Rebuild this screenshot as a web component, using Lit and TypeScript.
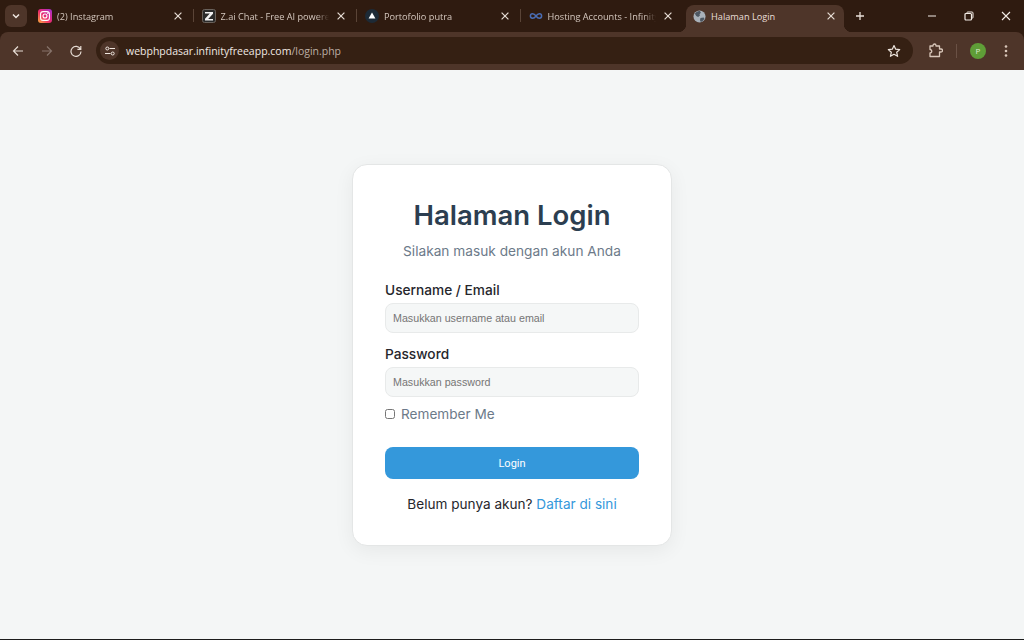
import { LitElement, html, css } from "lit";
import { customElement } from "lit/decorators.js";

const closeIcon = html`<svg class="x" width="8" height="8" viewBox="0 0 8 8"><path d="M.6.6l6.800 6.800M7.400.6L.6 7.400" stroke="currentColor" stroke-width="1.200" fill="none"/></svg>`;

const favicons = {
  insta: html`<svg width="14" height="14" viewBox="0 0 14 14">
    <defs><linearGradient id="ig" x1="0" y1="1" x2="1" y2="0">
      <stop offset="0" stop-color="#fdb03c"/><stop offset=".45" stop-color="#ee2a6b"/><stop offset="1" stop-color="#a32fd6"/>
    </linearGradient></defs>
    <rect width="14" height="14" rx="3" fill="url(#ig)"/>
    <rect x="2.600" y="2.600" width="8.800" height="8.800" rx="2.500" fill="none" stroke="#fff" stroke-width="1.100"/>
    <circle cx="7" cy="7" r="2" fill="none" stroke="#fff" stroke-width="1.100"/>
    <circle cx="9.800" cy="4.200" r=".7" fill="#fff"/></svg>`,
  zai: html`<svg width="14" height="14" viewBox="0 0 14 14">
    <rect x=".5" y=".5" width="13" height="13" rx="2" fill="#2b2b2b" stroke="#6a625c"/>
    <path d="M3 3h8v1.800L6.200 10H11v1.500H3V9.700L7.800 4.600H3z" fill="#f1f1f1"/></svg>`,
  vercel: html`<svg width="14" height="14" viewBox="0 0 14 14">
    <circle cx="7" cy="7" r="7" fill="#1d2a36"/><path d="M7 3.600l3.400 5.800H3.600z" fill="#fff"/></svg>`,
  infinity: html`<svg width="14" height="14" viewBox="0 0 14 14">
    <path d="M7 7C5.800 5.300 4.800 4.800 3.600 4.800a2.200 2.200 0 0 0 0 4.400C4.800 9.200 5.800 8.700 7 7s2.200-2.200 3.400-2.200a2.200 2.200 0 0 1 0 4.400C9.200 9.200 8.200 8.700 7 7z" fill="none" stroke="#4a6db5" stroke-width="1.500"/></svg>`,
  globe: html`<svg width="13" height="13" viewBox="0 0 14 14">
    <circle cx="7" cy="7" r="6.500" fill="#a9b1b9"/>
    <path d="M2 4c1.500-2 3.500-3 5.500-2.800L8.500 3 7 4.500 7.500 6 5.500 7.500 3.500 6.500zM8 8.500l3.500-.5.800 1.500C11.500 11 10 12.500 8.500 13L7.500 11z" fill="#4d5762"/></svg>`,
};

const tabs = [
  { icon: favicons.insta, title: "(2) Instagram" },
  { icon: favicons.zai, title: "Z.ai Chat - Free AI powered" },
  { icon: favicons.vercel, title: "Portofolio putra" },
  { icon: favicons.infinity, title: "Hosting Accounts - Infinity" },
];

@customElement("browser-chrome")
class BrowserChrome extends LitElement {
  static styles = css`
    :host {
      display: block;
      font-family: "Open Sans", "Liberation Sans", sans-serif;
      color: #e9dfd8;
      background: #2f1b10;
    }
    .strip {
      height: 32px;
      display: flex;
      align-items: flex-end;
    }
    .search {
      width: 22px;
      height: 22px;
      margin: 0 0 5px 5px;
      border-radius: 6px;
      background: #4e3529;
      display: flex;
      align-items: center;
      justify-content: center;
    }
    .tabs {
      display: flex;
      margin-left: 2px;
      height: 27px;
    }
    .tab {
      width: 163.500px;
      display: flex;
      align-items: center;
      box-sizing: border-box;
      padding: 0 11px 5px 9px;
      position: relative;
      font-size: 9.200px;
      color: #d4c7be;
    }
    .tab + .tab::before {
      content: "";
      position: absolute;
      left: 0;
      top: 4px;
      width: 1px;
      height: 13px;
      background: #5a4437;
    }
    .tab .title {
      flex: 1;
      margin-left: 5px;
      white-space: nowrap;
      overflow: hidden;
      -webkit-mask-image: linear-gradient(to right, #000 88%, transparent);
      mask-image: linear-gradient(to right, #000 88%, transparent);
    }
    .tab .x {
      margin-left: 8px;
      flex: none;
      color: #e6dcd4;
    }
    .tab.active {
      width: 158px;
      margin-left: 3px;
      background: #4e3529;
      border-radius: 8px 8px 0 0;
      padding: 0 9px 5px 7px;
      color: #e9dfd8;
    }
    .tab.active .title {
      -webkit-mask-image: none;
      mask-image: none;
    }
    .tab.active::before,
    .tab.active::after {
      content: "";
      position: absolute;
      bottom: 0;
      top: auto;
      width: 8px;
      height: 8px;
      background: radial-gradient(circle at 0 0, transparent 8px, #4e3529 8.500px);
    }
    .tab.active::before {
      left: -8px;
    }
    .tab.active::after {
      right: -8px;
      background: radial-gradient(circle at 100% 0, transparent 8px, #4e3529 8.500px);
    }
    .plus {
      margin: 0 0 5px 11px;
      width: 10px;
      height: 22px;
      display: flex;
      align-items: center;
      color: #e9dfd8;
    }
    .win {
      margin-left: auto;
      height: 32px;
      display: flex;
      align-self: flex-start;
    }
    .win span {
      width: 37px;
      display: flex;
      align-items: center;
      justify-content: center;
      color: #f3ece6;
    }
    .toolbar {
      height: 38px;
      box-sizing: border-box;
      padding-bottom: 1px;
      background: #4e3529;
      border-radius: 8px 8px 0 0;
      display: flex;
      align-items: center;
    }
    .nav {
      width: 29px;
      height: 28px;
      display: flex;
      align-items: center;
      justify-content: center;
      color: #e6dcd4;
      flex: none;
    }
    .nav.first {
      margin-left: 3px;
    }
    .nav.off {
      color: #86736a;
    }
    .omni {
      flex: 1;
      margin-left: 6px;
      height: 27px;
      border-radius: 14px;
      background: #352013;
      display: flex;
      align-items: center;
      padding: 0 12px 0 4px;
      font-size: 10.500px;
    }
    .tune {
      width: 19px;
      height: 19px;
      border-radius: 50%;
      background: #4e3529;
      display: flex;
      align-items: center;
      justify-content: center;
      margin-right: 7px;
    }
    .host {
      color: #f1e9e3;
    }
    .path {
      color: #bcaea5;
    }
    .star {
      margin-left: auto;
      display: flex;
      color: #efe6df;
    }
    .ext {
      width: 16px;
      margin-left: 14px;
      display: flex;
      color: #d9c7ba;
    }
    .sep {
      width: 1px;
      height: 14px;
      background: #6a5145;
      margin: 0 13px;
    }
    .avatar {
      width: 16px;
      height: 16px;
      border-radius: 50%;
      background: #5f9e37;
      color: #dfeccf;
      font-size: 8px;
      display: flex;
      align-items: center;
      justify-content: center;
    }
    .dots {
      display: flex;
      margin: 0 16px 0 18px;
      color: #d9c7ba;
    }
  `;

  render() {
    return html`
      <div class="strip">
        <div class="search">
          <svg width="10" height="10" viewBox="0 0 10 10"><path d="M2 3.500l3 3 3-3" stroke="#f0e7e0" stroke-width="1.500" fill="none"/></svg>
        </div>
        <div class="tabs">
          ${tabs.map(
            (t) => html`<div class="tab">${t.icon}<span class="title">${t.title}</span>${closeIcon}</div>`
          )}
          <div class="tab active">${favicons.globe}<span class="title">Halaman Login</span>${closeIcon}</div>
        </div>
        <div class="plus">
          <svg width="10" height="10" viewBox="0 0 10 10"><path d="M5 1v8M1 5h8" stroke="currentColor" stroke-width="1.300" fill="none"/></svg>
        </div>
        <div class="win">
          <span><svg width="10" height="10" viewBox="0 0 10 10"><path d="M1 5h8" stroke="currentColor" fill="none"/></svg></span>
          <span><svg width="10" height="10" viewBox="0 0 10 10"><rect x="1" y="2.500" width="6.500" height="6.500" rx="1" stroke="currentColor" stroke-width="1.200" fill="none"/><path d="M3 2.500V1.500Q3 1 3.500 1H8q1 0 1 1v4.500q0 .5-.5.5H7.500" stroke="currentColor" fill="none"/></svg></span>
          <span><svg width="10" height="10" viewBox="0 0 10 10"><path d="M1 1l8 8M9 1l-8 8" stroke="currentColor" stroke-width="1.100" fill="none"/></svg></span>
        </div>
      </div>
      <div class="toolbar">
        <span class="nav first"><svg width="12" height="12" viewBox="0 0 12 12"><path d="M11 6H1.500M6 1.500L1.500 6 6 10.500" stroke="currentColor" stroke-width="1.200" fill="none"/></svg></span>
        <span class="nav off"><svg width="12" height="12" viewBox="0 0 12 12"><path d="M1 6h9.500M6 1.500L10.500 6 6 10.500" stroke="currentColor" stroke-width="1.200" fill="none"/></svg></span>
        <span class="nav"><svg width="12" height="12" viewBox="0 0 12 12"><path d="M10.400 4A5 5 0 1 0 11 6.500M10.800 1v3.400H7.400" stroke="currentColor" stroke-width="1.200" fill="none"/></svg></span>
        <div class="omni">
          <span class="tune"><svg width="12" height="12" viewBox="0 0 12 12"><circle cx="3.300" cy="3.500" r="1.500" stroke="#f0e7e0" fill="none"/><path d="M5.500 3.500H11M1 8.500h5.500" stroke="#f0e7e0" fill="none"/><circle cx="8.700" cy="8.500" r="1.500" stroke="#f0e7e0" fill="none"/></svg></span>
          <span class="host">webphpdasar.infinityfreeapp.com</span><span class="path">/login.php</span>
          <span class="star"><svg width="14" height="14" viewBox="0 0 14 14"><path d="M7 1.500l1.700 3.700 4 .4-3 2.700.9 4L7 10.300l-3.600 2 .9-4-3-2.700 4-.4z" stroke="currentColor" stroke-width="1.200" fill="none" stroke-linejoin="round"/></svg></span>
        </div>
        <span class="ext"><svg width="16" height="16" viewBox="0 0 16 16"><path d="M6 3V2.500a1.500 1.500 0 0 1 3 0V3h3.500v3H14a1.500 1.500 0 0 1 0 3h-1.500v4.500H3v-3.500a1.500 1.500 0 0 0 0-3.500V3z" stroke="currentColor" stroke-width="1.300" fill="none" stroke-linejoin="round"/></svg></span>
        <span class="sep"></span>
        <span class="avatar">P</span>
        <span class="dots"><svg width="4" height="14" viewBox="0 0 4 14"><circle cx="2" cy="2.500" r="1.300" fill="currentColor"/><circle cx="2" cy="7" r="1.300" fill="currentColor"/><circle cx="2" cy="11.500" r="1.300" fill="currentColor"/></svg></span>
      </div>
    `;
  }
}

@customElement("login-card")
class LoginCard extends LitElement {
  static styles = css`
    :host {
      display: block;
      width: 320px;
      box-sizing: border-box;
      padding: 32px 32px 30px;
      background: #fff;
      border-radius: 15px;
      box-shadow: 0 5px 20px rgba(0, 0, 0, 0.06);
      border: 1px solid #e4e6e6;
      font-family: Inter, "Open Sans", sans-serif;
    }
    h1 {
      margin: 0;
      text-align: center;
      font-size: 27.500px;
      line-height: 36px;
      font-weight: 600;
      color: #2c3e50;
    }
    .sub {
      margin: 8px 0 17px;
      text-align: center;
      font-size: 13.700px;
      line-height: 21px;
      color: #6c7a89;
    }
    label.field {
      display: block;
      font-size: 13.700px;
      line-height: 23px;
      font-weight: 500;
      color: #26262c;
      margin-bottom: 1px;
    }
    input.text {
      display: block;
      width: 100%;
      box-sizing: border-box;
      height: 30px;
      padding: 0 7px;
      border: 1px solid #e8eaea;
      border-radius: 8px;
      background: #f5f7f7;
      font-family: "Liberation Sans", sans-serif;
      font-size: 10.700px;
      margin-bottom: 10px;
    }
    input.text::placeholder {
      color: #757575;
    }
    .remember {
      display: flex;
      align-items: center;
      font-size: 13.600px;
      color: #6c7a89;
      height: 14px;
    }
    .remember input {
      width: 10px;
      height: 10px;
      margin: 0 6px 0 0;
    }
    button {
      display: block;
      width: 100%;
      height: 32px;
      margin-top: 26px;
      border: none;
      border-radius: 8px;
      background: #3498db;
      color: #fff;
      font-family: Roboto, sans-serif;
      font-size: 11px;
    }
    .foot {
      margin: 15px 0 0;
      text-align: center;
      font-size: 13.600px;
      line-height: 21px;
      color: #26262c;
    }
    .foot a {
      color: #3498db;
      text-decoration: none;
    }
  `;

  render() {
    return html`
      <h1>Halaman Login</h1>
      <p class="sub">Silakan masuk dengan akun Anda</p>
      <label class="field">Username / Email</label>
      <input class="text" placeholder="Masukkan username atau email" />
      <label class="field">Password</label>
      <input class="text" type="password" placeholder="Masukkan password" />
      <label class="remember"><input type="checkbox" />Remember Me</label>
      <button>Login</button>
      <p class="foot">Belum punya akun? <a href="#">Daftar di sini</a></p>
    `;
  }
}

@customElement("app-root")
export class AppRoot extends LitElement {
  static styles = css`
    :host {
      display: flex;
      flex-direction: column;
      height: 640px;
      background: #f4f6f6;
    }
    main {
      flex: 1;
      display: flex;
      align-items: flex-start;
      justify-content: center;
      padding-top: 94px;
    }
    .edge {
      height: 1px;
      background: #1c1c1c;
    }
  `;

  render() {
    return html`
      <browser-chrome></browser-chrome>
      <main><login-card></login-card></main>
      <div class="edge"></div>
    `;
  }
}
